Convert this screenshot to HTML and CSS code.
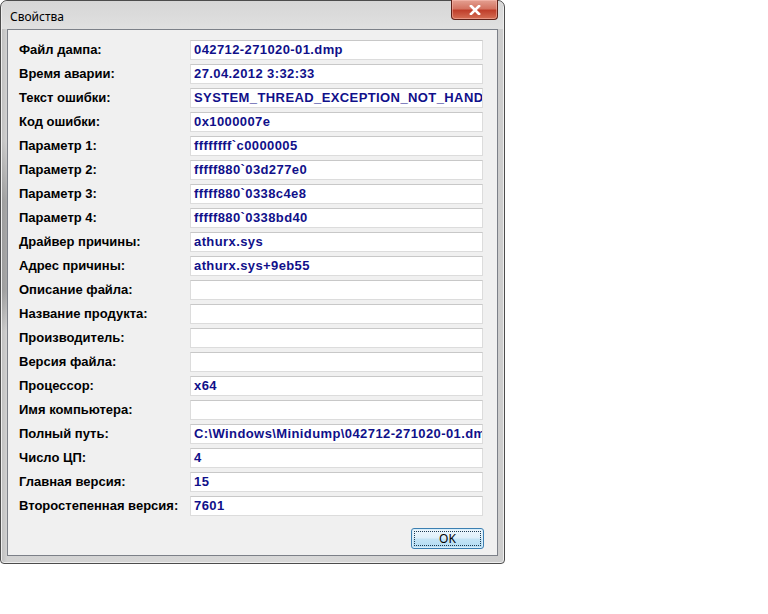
FILE: index.html
```html
<!DOCTYPE html>
<html lang="ru">
<head>
<meta charset="utf-8">
<title>Свойства</title>
<link rel="stylesheet" href="styles.css">
</head>
<body>
<div class="window">
  <div class="titlebar">
    <span class="title">Свойства</span>
    <button class="close" type="button" aria-label="Закрыть">
      <svg width="14" height="10" viewBox="0 0 14 10"><path d="M3 1 L11 9 M11 1 L3 9" stroke="#ffffff" stroke-width="2.6" stroke-linecap="square" fill="none"/></svg>
    </button>
  </div>
  <div class="client">
    <div class="fields">
      <span class="label">Файл дампа:</span><div class="value">042712-271020-01.dmp</div>
      <span class="label">Время аварии:</span><div class="value">27.04.2012 3:32:33</div>
      <span class="label">Текст ошибки:</span><div class="value">SYSTEM_THREAD_EXCEPTION_NOT_HANDLED</div>
      <span class="label">Код ошибки:</span><div class="value">0x1000007e</div>
      <span class="label">Параметр 1:</span><div class="value">ffffffff`c0000005</div>
      <span class="label">Параметр 2:</span><div class="value">fffff880`03d277e0</div>
      <span class="label">Параметр 3:</span><div class="value">fffff880`0338c4e8</div>
      <span class="label">Параметр 4:</span><div class="value">fffff880`0338bd40</div>
      <span class="label">Драйвер причины:</span><div class="value">athurx.sys</div>
      <span class="label">Адрес причины:</span><div class="value">athurx.sys+9eb55</div>
      <span class="label">Описание файла:</span><div class="value"></div>
      <span class="label">Название продукта:</span><div class="value"></div>
      <span class="label">Производитель:</span><div class="value"></div>
      <span class="label">Версия файла:</span><div class="value"></div>
      <span class="label">Процессор:</span><div class="value">x64</div>
      <span class="label">Имя компьютера:</span><div class="value"></div>
      <span class="label">Полный путь:</span><div class="value">C:\Windows\Minidump\042712-271020-01.dmp</div>
      <span class="label">Число ЦП:</span><div class="value">4</div>
      <span class="label">Главная версия:</span><div class="value">15</div>
      <span class="label">Второстепенная версия:</span><div class="value">7601</div>
    </div>
    <div class="buttons">
      <button class="ok" type="button"><span class="focus">OK</span></button>
    </div>
  </div>
</div>
</body>
</html>
```
FILE: styles.css
```css
html, body {
  margin: 0;
  padding: 0;
  background: #ffffff;
}

.window {
  box-sizing: border-box;
  width: 505px;
  height: 564px;
  border: 1px solid #4c4c4c;
  border-radius: 7px 7px 4px 4px;
  background:
    linear-gradient(to bottom, rgba(0,0,0,0) 0px, rgba(0,0,0,0) 140px, rgba(90,90,90,0.35) 200px, rgba(90,90,90,0.35) 290px, rgba(0,0,0,0) 330px) left top / 7px 100% no-repeat,
    linear-gradient(to right, #bdbdbd 0px, #d2d2d2 6px, #d8d8d8 60%, #cdcdcd 100%);
  box-shadow: inset 0 0 0 1px #eeeeee;
  padding: 0 6px 7px 6px;
  display: flex;
  flex-direction: column;
}

.titlebar {
  height: 28px;
  display: flex;
  align-items: flex-start;
  background: linear-gradient(to bottom, #d6d6d6, #e0e0e0);
  margin: 0 -5px;
  padding: 0 5px;
  border-radius: 6px 6px 0 0;
}

.title {
  font-family: "Noto Sans", "Open Sans", sans-serif;
  font-size: 12px;
  color: #000;
  margin-top: 7px;
  margin-left: 3px;
}

.close {
  margin-left: auto;
  margin-top: -1px;
  margin-right: 0;
  width: 47px;
  height: 20px;
  padding: 0;
  border: 1px solid #5e2118;
  border-top: none;
  border-radius: 0 0 4px 4px;
  background: linear-gradient(to bottom, #e4a091 0%, #d47462 45%, #bf3f2b 55%, #d56f55 100%);
  box-shadow: inset 0 0 0 1px rgba(255, 200, 190, 0.45);
  display: flex;
  align-items: center;
  justify-content: center;
}

.client {
  flex: 1;
  background: #f0f0f0;
  border: 1px solid #7c8088;
  display: flex;
  flex-direction: column;
  padding: 10px 13px 0 11px;
}

.fields {
  display: grid;
  grid-template-columns: 171px 293px;
  grid-auto-rows: 20px;
  row-gap: 4px;
}

.label {
  font-family: "Liberation Sans", Arial, sans-serif;
  font-weight: bold;
  font-size: 13px;
  color: #000;
  line-height: 20px;
  white-space: nowrap;
}

.value {
  box-sizing: border-box;
  height: 20px;
  background: #ffffff;
  border: 1px solid #dcdcdc;
  border-top-color: #c8c8c8;
  padding: 0 3px;
  font-family: "Liberation Sans", Arial, sans-serif;
  font-weight: bold;
  font-size: 13px;
  letter-spacing: 0.4px;
  color: #10108a;
  line-height: 18px;
  white-space: nowrap;
  overflow: hidden;
}

.buttons {
  display: flex;
  justify-content: flex-end;
  margin-top: 12px;
}

.ok {
  box-sizing: border-box;
  width: 73px;
  height: 21px;
  padding: 2px;
  border: 1px solid #3c7fb1;
  border-radius: 3px;
  background: linear-gradient(to bottom, #eef7fd 0%, #dff0fb 48%, #c4e4f6 52%, #b2dcf3 100%);
  box-shadow: inset 0 0 0 1px #d8eefb;
  display: flex;
}

.focus {
  flex: 1;
  border: 1px dotted #1d3a52;
  font-family: "Noto Sans", "Open Sans", sans-serif;
  font-size: 12px;
  line-height: 13px;
  color: #000;
  display: flex;
  align-items: center;
  justify-content: center;
}
```
